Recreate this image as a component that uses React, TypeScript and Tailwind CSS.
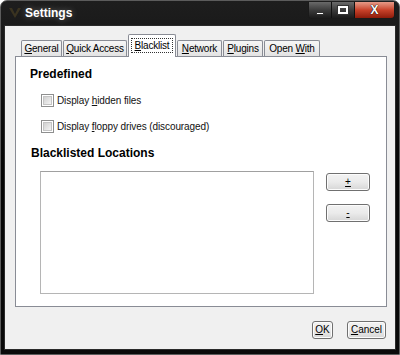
import React from "react";

const font = { fontFamily: '"Liberation Sans", Arial, sans-serif' };

const U = ({ children }: { children: React.ReactNode }) => <span className="underline underline-offset-[1px]">{children}</span>;

const Tab = ({ children, active, w }: { children: React.ReactNode; active?: boolean; w: string }) =>
  active ? (
    <div className={`${w} relative z-10 -mb-px h-[23px] px-[2px] pt-[3px] bg-white border border-b-0 border-[#898c95] rounded-t-[2px]`}>
      <div className="border border-dotted border-[#333] text-center leading-[13px] text-[10px] tracking-[-0.2px] text-black whitespace-nowrap">
        <span>{children}</span>
      </div>
    </div>
  ) : (
    <div className={`${w} h-[16px] flex items-center justify-center border border-b-0 border-[#898c95] rounded-t-[2px] bg-gradient-to-b from-[#f6f6f6] to-[#e3e3e3] text-[10px] tracking-[-0.2px] leading-none text-black whitespace-nowrap`}>
      <span>{children}</span>
    </div>
  );

const Check = ({ children }: { children: React.ReactNode }) => (
  <div className="flex items-center h-[13px] ml-[25px]">
    <div className="w-[13px] h-[13px] border border-[#8e8f8f] bg-white p-px">
      <div className="w-full h-full bg-gradient-to-br from-[#d0d0d0] to-[#f4f4f4] border border-[#c4c4c4]" />
    </div>
    <span className="ml-[3px] text-[10px] tracking-[-0.1px] text-[#111]">{children}</span>
  </div>
);

const Btn = ({ children, w }: { children: React.ReactNode; w: string }) => (
  <div className={`${w} h-[18px] rounded-[3px] border border-[#707070] bg-gradient-to-b from-[#f2f2f2] via-[#ebebeb] to-[#d6d6d6] shadow-[inset_0_0_0_1px_#fcfcfc] flex items-center justify-center text-[10px] text-black leading-none`}>
    <span>{children}</span>
  </div>
);

export default function App() {
  return (
    <div className="w-[400px] h-[355px] bg-white" style={font}>
      <div className="w-full h-full flex flex-col rounded-t-[7px] border border-[#5c5c5c] bg-gradient-to-b from-[#1e1e1e] via-[#050505] to-[#0a0a0a] px-[3px] pb-[4px]">
        {/* title bar */}
        <div className="h-[24px] flex items-start relative">
          <svg width="14" height="14" viewBox="0 0 14 14" className="mt-[5px] ml-[4px]">
            <path d="M1 2 L7 12 L13 2 L10 2 L7 8 L4 2 Z" fill="#3a3320" />
          </svg>
          <span className="ml-[3px] mt-[6px] text-[12px] font-bold text-white leading-none [text-shadow:0_0_6px_rgba(255,255,255,0.35)]">Settings</span>
          <div className="ml-auto mr-[1px] mt-[1px] flex h-[17px] rounded-b-[4px] border border-[#1a1a1a] border-t-0 overflow-hidden">
            <div className="w-[23px] h-full flex items-center justify-center bg-gradient-to-b from-[#6a6a6a] via-[#3c3c3c] to-[#1c1c1c] border-r border-[#111]">
              <div className="w-[8px] h-[3px] mt-[6px] bg-white border border-[#333]" />
            </div>
            <div className="w-[23px] h-full flex items-center justify-center bg-gradient-to-b from-[#6a6a6a] via-[#3c3c3c] to-[#1c1c1c] border-r border-[#111]">
              <div className="w-[10px] h-[8px] border-2 border-white outline outline-1 outline-[#333]" />
            </div>
            <div className="w-[39px] h-full flex items-center justify-center bg-gradient-to-b from-[#e59a88] via-[#c8422a] to-[#8e1b0a]">
              <span className="text-white font-bold text-[12px] leading-none [text-shadow:0_0_1px_#000,0_0_1px_#000]">X</span>
            </div>
          </div>
        </div>

        {/* client area */}
        <div className="flex-1 flex flex-col bg-[#f0f0f0] border border-[#2a2a2a] pl-[10px] pr-[8px] pt-[7px]">
          <div className="flex items-end gap-px ml-[6px] h-[23px]">
            <Tab w="w-[41px]"><U>G</U>eneral</Tab>
            <Tab w="w-[64px]"><U>Q</U>uick Access</Tab>
            <Tab w="w-[48px]" active><U>B</U>lacklist</Tab>
            <Tab w="w-[45px]"><U>N</U>etwork</Tab>
            <Tab w="w-[40px]"><U>P</U>lugins</Tab>
            <Tab w="w-[56px]">Open <U>W</U>ith</Tab>
          </div>
          <div className="h-[251px] bg-white border border-[#898c95] flex flex-col">
            <div className="ml-[14px] mt-[10px] text-[12px] font-bold leading-[14px] text-black">Predefined</div>
            <div className="mt-[13px]"><Check>Display <U>h</U>idden files</Check></div>
            <div className="mt-[13px]"><Check>Display <U>f</U>loppy drives (discouraged)</Check></div>
            <div className="ml-[15px] mt-[13px] text-[12px] font-bold leading-[14px] text-black">Blacklisted Locations</div>
            <div className="flex items-start mt-[11px] ml-[24px]">
              <div className="w-[274px] h-[123px] border border-[#b5b5b5] border-t-[#a0a0a0] bg-white" />
              <div className="ml-[12px] mt-[2px] flex flex-col gap-[13px]">
                <Btn w="w-[44px]"><U>+</U></Btn>
                <Btn w="w-[44px]"><U>-</U></Btn>
              </div>
            </div>
          </div>
          <div className="flex justify-end gap-[14px] mt-[14px] mr-[1px]">
            <Btn w="w-[21px]"><U>O</U>K</Btn>
            <Btn w="w-[39px]"><U>C</U>ancel</Btn>
          </div>
        </div>
      </div>
    </div>
  );
}
